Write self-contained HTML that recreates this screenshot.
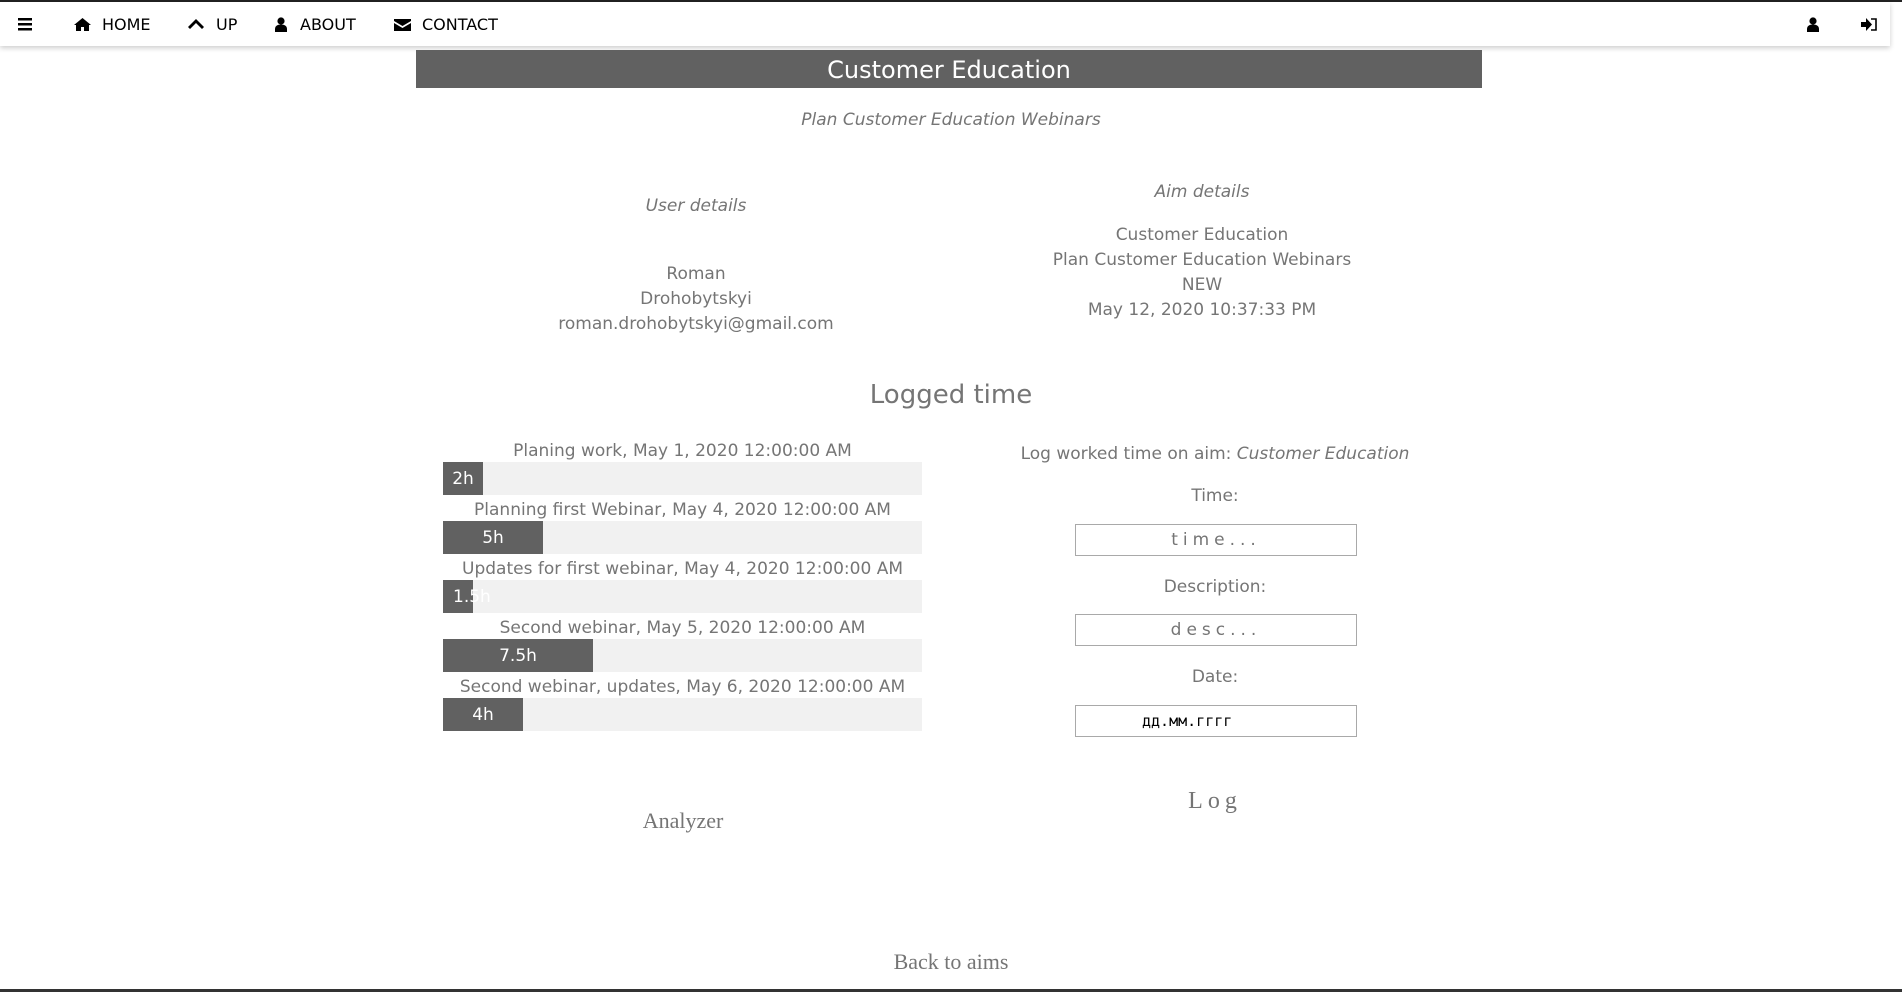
<!DOCTYPE html>
<html><head><meta charset="utf-8"><style>
*{margin:0;padding:0;box-sizing:border-box}
body{width:1902px;height:992px;overflow:hidden;background:#fff;font-family:"DejaVu Sans","Liberation Sans",sans-serif;color:#757575;position:relative}
.top{position:absolute;left:0;top:0;width:1902px;height:2px;background:#222}
.nav{position:absolute;left:0;top:2px;width:1890px;height:44px;background:#fff;box-shadow:0 2px 5px rgba(0,0,0,.2);font-family:"DejaVu Sans",sans-serif;font-size:16px;color:#000}
.nav span{position:absolute;top:13px}
.nav svg{position:absolute}
.a{position:absolute;text-align:center}
.hdr{position:absolute;left:416px;top:50px;width:1066px;height:38px;background:#616161;color:#fff;font-size:24px;text-align:center;line-height:40px}
.it{font-style:italic}
.lbl{position:absolute;left:443px;width:479px;text-align:center;font-size:17px}
.bar{position:absolute;left:443px;width:479px;height:33px;background:#f1f1f1}
.bar div{height:33px;background:#616161;color:#fff;font-size:17px;line-height:35px;text-align:center;white-space:nowrap}
.inp{position:absolute;left:1075px;width:282px;height:32px;border:1px solid #a9a9a9;text-align:center;line-height:31px;font-size:17px;letter-spacing:5px;color:#757575}
.serif{font-family:"Liberation Serif",serif}
</style></head><body>
<div class="top"></div>
<div class="nav">
<svg style="left:18px;top:16px" width="14" height="13" viewBox="0 0 14 13"><rect y="0" width="14" height="2.5" fill="#000"/><rect y="5" width="14" height="2.5" fill="#000"/><rect y="10" width="14" height="2.5" fill="#000"/></svg>
<svg style="left:74px;top:16px" width="17" height="13" viewBox="0 0 17 13"><path d="M8.5 0L0 7h2v6h5V9h3v4h5V7h2z" fill="#000"/></svg>
<span style="left:102px">HOME</span>
<svg style="left:188px;top:17px" width="16" height="11" viewBox="0 0 16 11"><path d="M2 10L8 4l6 6 2-2L8 0 0 8z" fill="#000"/></svg>
<span style="left:216px">UP</span>
<svg style="left:275px;top:15px" width="12" height="15" viewBox="0 0 12 15"><circle cx="6" cy="4" r="3.6" fill="#000"/><path d="M0 15v-3c0-3 2.5-4.5 6-4.5s6 1.5 6 4.5v3z" fill="#000"/></svg>
<span style="left:300px">ABOUT</span>
<svg style="left:394px;top:17px" width="17" height="12" viewBox="0 0 17 12"><path d="M0 0h17v2L8.5 7 0 2zM0 4l8.5 5L17 4v8H0z" fill="#000"/></svg>
<span style="left:422px">CONTACT</span>
<svg style="left:1807px;top:15px" width="12" height="15" viewBox="0 0 12 15"><circle cx="6" cy="4" r="3.6" fill="#000"/><path d="M0 15v-3c0-3 2.5-4.5 6-4.5s6 1.5 6 4.5v3z" fill="#000"/></svg>
<svg style="left:1861px;top:16px" width="16" height="13" viewBox="0 0 16 13"><path d="M0 4h5V0l6 6.5L5 13V9H0z" fill="#000"/><path d="M10 1h5v11h-5" fill="none" stroke="#000" stroke-width="1.6"/></svg>
</div>
<div class="hdr">Customer Education</div>
<div class="a it" style="left:0;width:1902px;top:110px;font-size:17px">Plan Customer Education Webinars</div>
<div class="a it" style="left:496px;width:400px;top:196px;font-size:17px">User details</div>
<div class="a" style="left:496px;width:400px;top:262px;font-size:17px;line-height:25px">Roman<br>Drohobytskyi<br>roman.drohobytskyi@gmail.com</div>
<div class="a it" style="left:1002px;width:400px;top:182px;font-size:17px">Aim details</div>
<div class="a" style="left:1002px;width:400px;top:223px;font-size:17px;line-height:25px">Customer Education<br>Plan Customer Education Webinars<br>NEW<br>May 12, 2020 10:37:33 PM</div>
<div class="a" style="left:0;width:1902px;top:380px;font-size:26px">Logged time</div>
<div class="lbl" style="top:441px">Planing work, May 1, 2020 12:00:00 AM</div>
<div class="bar" style="top:462px"><div style="width:40px">2h</div></div>
<div class="lbl" style="top:500px">Planning first Webinar, May 4, 2020 12:00:00 AM</div>
<div class="bar" style="top:521px"><div style="width:100px">5h</div></div>
<div class="lbl" style="top:559px">Updates for first webinar, May 4, 2020 12:00:00 AM</div>
<div class="bar" style="top:580px"><div style="width:30px;text-align:left;padding-left:10px">1.5h</div></div>
<div class="lbl" style="top:618px">Second webinar, May 5, 2020 12:00:00 AM</div>
<div class="bar" style="top:639px"><div style="width:150px">7.5h</div></div>
<div class="lbl" style="top:677px">Second webinar, updates, May 6, 2020 12:00:00 AM</div>
<div class="bar" style="top:698px"><div style="width:80px">4h</div></div>
<div class="a" style="left:1000px;width:430px;top:444px;font-size:17px">Log worked time on aim: <i>Customer Education</i></div>
<div class="a" style="left:1000px;width:430px;top:486px;font-size:17px">Time:</div>
<div class="inp" style="top:524px">time...</div>
<div class="a" style="left:1000px;width:430px;top:577px;font-size:17px">Description:</div>
<div class="inp" style="top:614px">desc...</div>
<div class="a" style="left:1000px;width:430px;top:667px;font-size:17px">Date:</div>
<div class="inp" style="top:705px;color:#000;letter-spacing:0;font-family:'DejaVu Sans Mono',monospace;font-size:15px;text-align:left;padding-left:66px">дд.мм.гггг</div>
<div class="a serif" style="left:1000px;width:430px;top:788px;font-size:24px;letter-spacing:5px">Log</div>
<div class="a serif" style="left:483px;width:400px;top:808px;font-size:22px">Analyzer</div>
<div class="a serif" style="left:0;width:1902px;top:949px;font-size:22px">Back to aims</div>
<div style="position:absolute;left:0;top:989px;width:1902px;height:3px;background:#333"></div>
</body></html>
